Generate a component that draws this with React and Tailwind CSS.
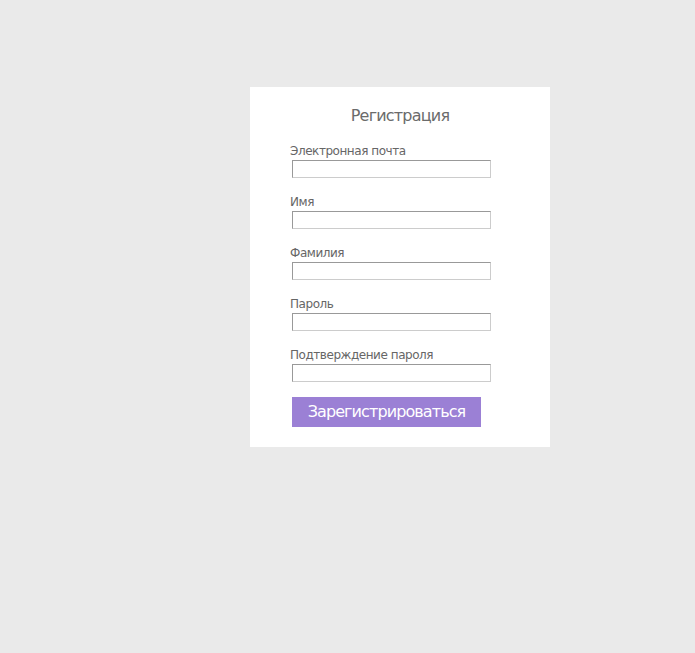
export default function App() {
  const fields = [
    "Электронная почта",
    "Имя",
    "Фамилия",
    "Пароль",
    "Подтверждение пароля",
  ];
  return (
    <div className="min-h-[653px] w-full bg-[#eaeaea] pt-[87px] pl-[250px]" style={{ fontFamily: '"DejaVu Sans", Tahoma, sans-serif' }}>
      <div className="w-[300px] h-[360px] bg-white flex flex-col">
        <div className="pt-[19px] text-center text-[16px] leading-[20px] tracking-[-0.8px] text-[#6b6b6b]">Регистрация</div>
        <div className="flex flex-col pl-[40px] pt-[17px]">
          {fields.map((f) => (
            <div key={f} className="flex flex-col h-[51px]">
              <div className="text-[12px] leading-[16px] tracking-[-0.45px] text-[#666]">{f}</div>
              <div className="ml-[2px] mt-[1px] w-[199px] h-[18px] border border-t-[#999] border-l-[#999] border-r-[#ccc] border-b-[#ccc] bg-white" />
            </div>
          ))}
          <div className="ml-[2px] mt-[-1px] w-[189px] h-[30px] bg-[#9b80d5] text-white text-[16px] tracking-[-0.9px] flex items-center justify-center">
            Зарегистрироваться
          </div>
        </div>
      </div>
    </div>
  );
}
